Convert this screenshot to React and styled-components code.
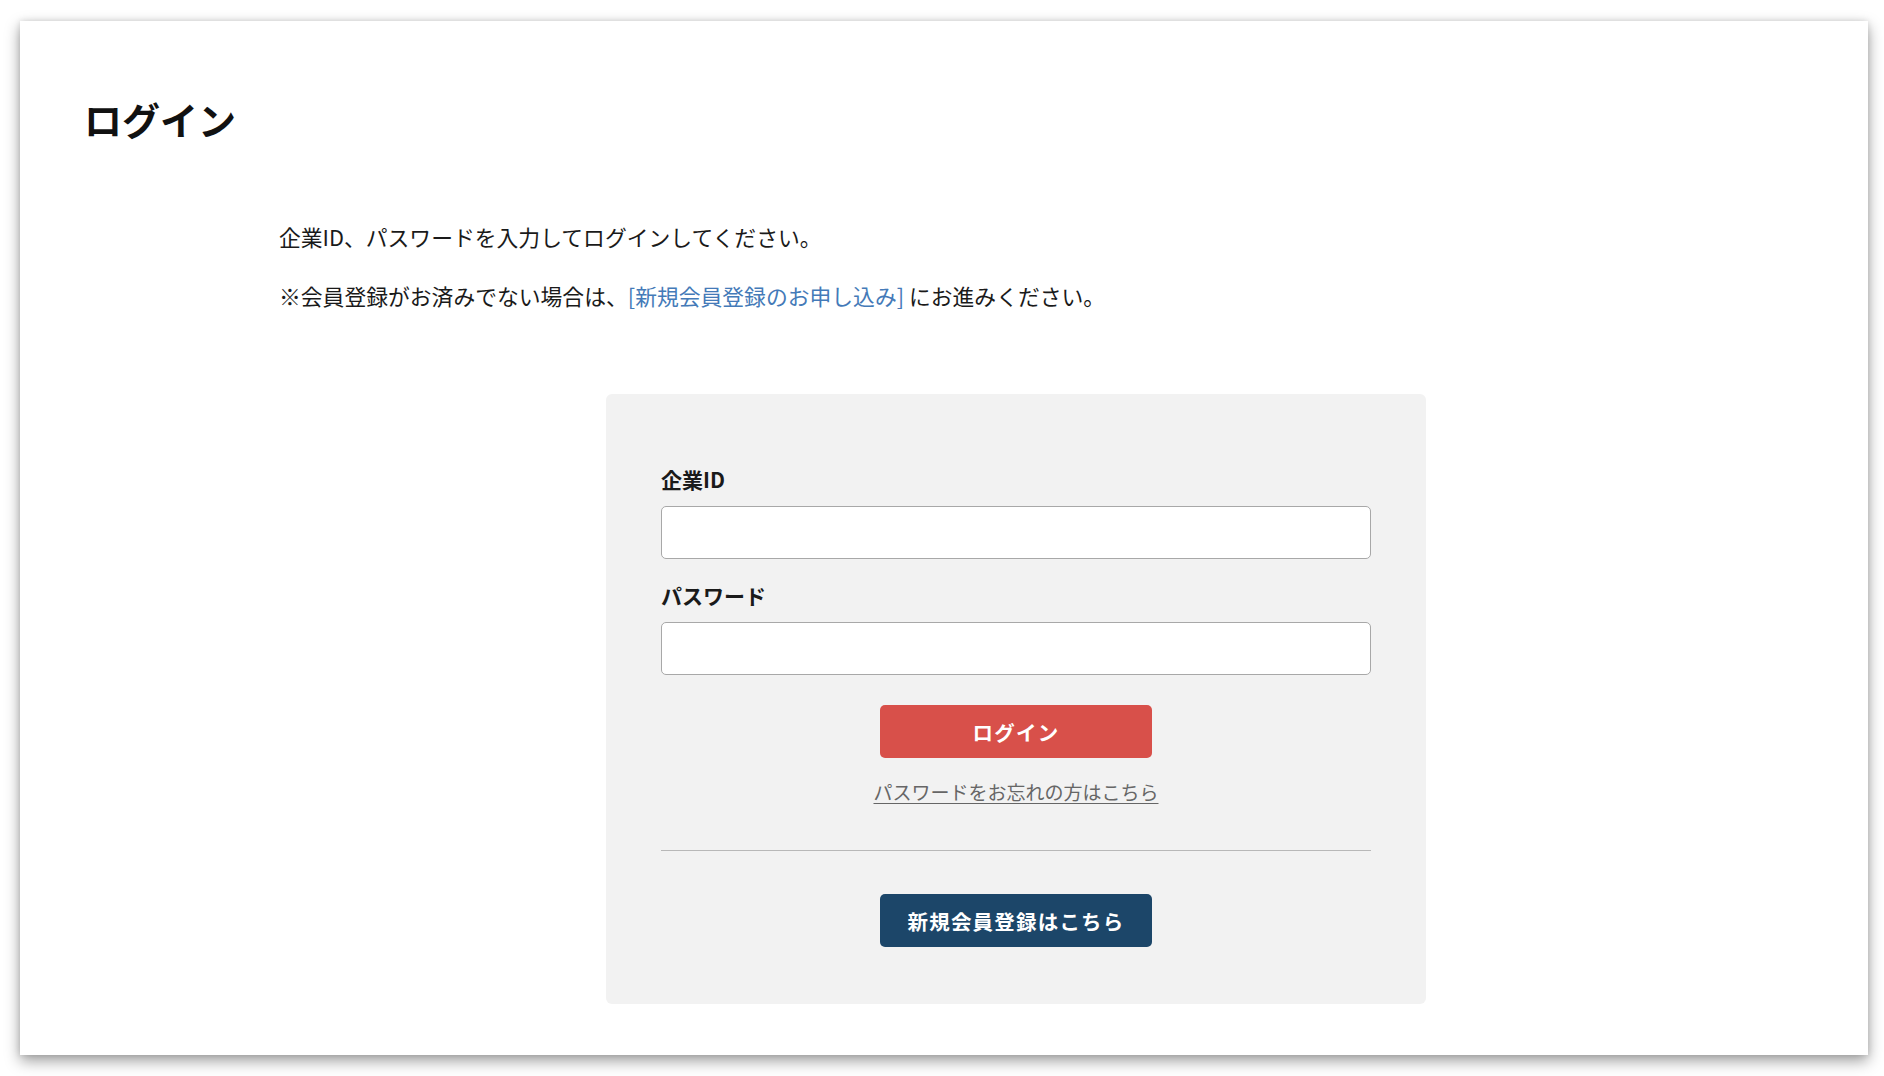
import React from "react";
import styled, { createGlobalStyle } from "styled-components";

const GlobalStyle = createGlobalStyle`
    * { box-sizing: border-box; }
    body {
        margin: 0;
        background: #ffffff;
        font-family: "Noto Sans CJK JP", "Noto Sans", sans-serif;
        color: #1a1a1a;
    }
`;

const App = () => {
    return (
        <Page>
            <GlobalStyle />
            <Card>
                <Title>ログイン</Title>
                <Content>
                    <Lead>企業ID、パスワードを入力してログインしてください。</Lead>
                    <Note>
                        ※会員登録がお済みでない場合は、<InlineLink href="#">[新規会員登録のお申し込み]</InlineLink> にお進みください。
                    </Note>
                    <LoginBox>
                        <Label htmlFor="company-id">企業ID</Label>
                        <Input id="company-id" type="text" />
                        <Label htmlFor="password" $spaced>パスワード</Label>
                        <Input id="password" type="password" />
                        <Button $color="#d8504a">ログイン</Button>
                        <Forgot href="#">パスワードをお忘れの方はこちら</Forgot>
                        <Divider />
                        <Button $color="#1c4669" $top={43}>新規会員登録はこちら</Button>
                    </LoginBox>
                </Content>
            </Card>
        </Page>
    );
};

const Page = styled.div`
    width: 1884px;
    height: 1076px;
    padding: 21px 0 0 20px;
    overflow: hidden;
`;

const Card = styled.div`
    width: 1848px;
    height: 1034px;
    background: #ffffff;
    padding: 71px 64px 0;
    box-shadow: 0 6px 14px rgba(0, 0, 0, 0.38), 0 0 6px rgba(0, 0, 0, 0.12);
`;

const Title = styled.h1`
    margin: 0;
    font-size: 38px;
    line-height: 53px;
    font-weight: 700;
    color: #111;
`;

const Content = styled.div`
    margin-left: 195px;
    padding-top: 74px;
`;

const Lead = styled.p`
    margin: 0;
    font-size: 21.8px;
    line-height: 36px;
`;

const Note = styled(Lead)`
    margin-top: 23px;
`;

const InlineLink = styled.a`
    color: #447ab8;
    text-decoration: none;
`;

const LoginBox = styled.div`
    width: 820px;
    margin: 80px 0 0 327px;
    padding: 70px 55px 57px;
    background: #f2f2f2;
    border-radius: 6px;
    display: flex;
    flex-direction: column;
    align-items: center;
`;

const Label = styled.label`
    align-self: stretch;
    font-size: 21px;
    line-height: 30px;
    font-weight: 700;
    margin-top: ${(p) => (p.$spaced ? "21px" : "0")};
`;

const Input = styled.input`
    align-self: stretch;
    height: 53px;
    margin-top: 12px;
    background: #ffffff;
    border: 1px solid #a8a8a8;
    border-radius: 5px;
    padding: 0 14px;
    font-size: 20px;
    font-family: inherit;
    outline: none;
`;

const Button = styled.button`
    width: 272px;
    height: 53px;
    margin-top: ${(p) => p.$top || 30}px;
    border: none;
    border-radius: 5px;
    background: ${(p) => p.$color};
    color: #ffffff;
    font-family: inherit;
    font-size: 20.5px;
    font-weight: 700;
    letter-spacing: 1.2px;
    cursor: pointer;
`;

const Forgot = styled.a`
    margin-top: 20px;
    font-size: 19px;
    line-height: 28px;
    color: #666;
    text-decoration: underline;
    text-underline-offset: 3px;
`;

const Divider = styled.hr`
    align-self: stretch;
    margin: 44px 0 0;
    border: none;
    border-top: 1.5px solid #b8b8b8;
`;

export default App;
